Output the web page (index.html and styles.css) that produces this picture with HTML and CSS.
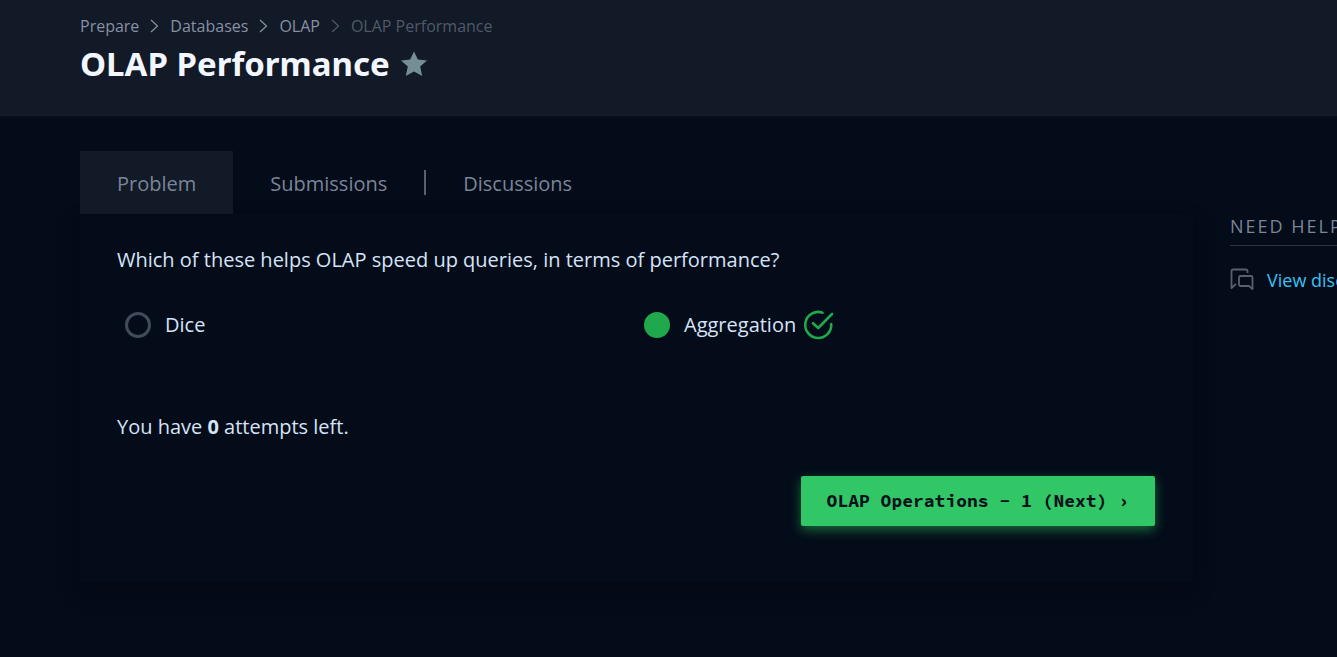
FILE: index.html
```html
<!DOCTYPE html>
<html lang="en">
<head>
<meta charset="utf-8">
<meta name="viewport" content="width=device-width, initial-scale=1">
<title>OLAP Performance</title>
<link rel="stylesheet" href="styles.css">
</head>
<body>
<header class="page-header">
  <nav class="breadcrumb" aria-label="Breadcrumb">
    <a href="#">Prepare</a>
    <svg class="chevron" viewBox="0 0 10 16" aria-hidden="true"><path d="M1.5 2l6.5 6-6.5 6"/></svg>
    <a href="#">Databases</a>
    <svg class="chevron" viewBox="0 0 10 16" aria-hidden="true"><path d="M1.5 2l6.5 6-6.5 6"/></svg>
    <a href="#">OLAP</a>
    <svg class="chevron dim" viewBox="0 0 10 16" aria-hidden="true"><path d="M1.5 2l6.5 6-6.5 6"/></svg>
    <span class="dim">OLAP Performance</span>
  </nav>
  <div class="title-row">
    <h1 class="title">OLAP Performance</h1>
    <button class="star-button" type="button" aria-label="Bookmark">
      <svg class="star" viewBox="0 0 26 26" aria-hidden="true"><path d="M13 .5l3.900 8 9.100.9-6.800 6.200 2 9.400-8.200-4.400-8.200 4.400 2-9.400L0 9.400l9.100-.9z"/></svg>
    </button>
  </div>
</header>
<div class="layout">
  <main class="main">
    <nav class="tabs" aria-label="Challenge sections">
      <a class="tab active" href="#">Problem</a>
      <a class="tab" href="#">Submissions</a>
      <span class="divider"></span>
      <a class="tab" href="#">Discussions</a>
    </nav>
    <section class="card">
      <p class="text" id="question">Which of these helps OLAP speed up queries, in terms of performance?</p>
      <div class="options" role="radiogroup" aria-labelledby="question">
        <div class="option">
          <input class="radio" type="radio" name="answer" id="dice">
          <label for="dice">Dice</label>
        </div>
        <div class="option">
          <input class="radio" type="radio" name="answer" id="aggregation" checked>
          <label for="aggregation">Aggregation</label>
          <svg class="check" viewBox="0 0 32 32" aria-hidden="true"><path d="M20.5 3.7A13 13 0 1 0 29.2 15M11 14.2l5.2 4.8L30 5"/></svg>
        </div>
      </div>
      <p class="text">You have <b>0</b> attempts left.</p>
      <div class="actions">
        <button class="next" type="button">OLAP Operations - 1 (Next) ›</button>
      </div>
    </section>
  </main>
  <aside class="sidebar">
    <h2 class="side-title">NEED HELP?</h2>
    <a class="side-link" href="#">
      <svg class="chat" viewBox="0 0 24 24" aria-hidden="true"><path d="M17.5 5V3.200q0-1.700-1.700-1.700H3.200q-1.700 0-1.700 1.700V20L6 16M10.500 8h10.500q1.500 0 1.500 1.500V21l-3.500-3h-8.500q-1.500 0-1.500-1.500v-7q0-1.500 1.500-1.500z"/></svg>
      <span>View discussions</span>
    </a>
  </aside>
</div>
</body>
</html>
```
FILE: styles.css
```css
* {
  box-sizing: border-box;
}

body {
  margin: 0;
  min-height: 100vh;
  overflow-x: hidden;
  background: #040b19;
  color: #d6e4f7;
  font: 20px/28px "Open Sans", "Noto Sans", sans-serif;
}

a {
  color: inherit;
  text-decoration: none;
}

.page-header {
  padding: 14px 80px 27px;
  background: #121927;
  box-shadow: 0 1px 3px #0c1320;
}

.breadcrumb {
  display: flex;
  flex-wrap: wrap;
  align-items: center;
  gap: 10px;
  color: #8791a3;
  font-size: 16px;
  line-height: 24px;
}

.chevron {
  width: 11px;
  height: 16px;
  fill: none;
  stroke: currentColor;
  stroke-width: 1.2;
}

.dim {
  color: #505968;
}

.title-row {
  display: flex;
  align-items: center;
  gap: 11px;
}

.title {
  margin: 0;
  color: #f1f6ff;
  font-family: "Noto Sans", "Open Sans", sans-serif;
  font-size: 33px;
  line-height: 51px;
}

.star-button {
  display: flex;
  padding: 0;
  border: 0;
  background: none;
}

.star {
  width: 26px;
  height: 26px;
  fill: #738f93;
}

.layout {
  display: flex;
  gap: 37px;
  padding: 35px 0 70px 80px;
}

.main {
  flex: 1;
  min-width: 0;
}

.tabs {
  display: flex;
  flex-wrap: wrap;
  align-items: center;
  color: #7b8598;
}

.tab {
  padding: 19px 37px 16px;
}

.active {
  background: #121927;
}

.divider {
  width: 2px;
  height: 25px;
  background: #596170;
}

.card {
  padding: 32px 38px 56px 37px;
  box-shadow: 0 8px 16px #040914;
  background: #040b19;
}

.text {
  margin: 0;
}

.options {
  display: grid;
  grid-template-columns: 1fr 1fr;
  margin-right: -8px;
  padding: 37px 0 74px 8px;
}

.option {
  display: flex;
  align-items: center;
}

.radio {
  width: 26px;
  height: 26px;
  margin: 0 14px 0 0;
  border: 3px solid #424b5a;
  border-radius: 50%;
  appearance: none;
}

.radio:checked {
  border-color: #1fa94c;
  background: #1fa94c;
}

.check {
  width: 32px;
  height: 32px;
  margin: -2px 0 -2px 6px;
  fill: none;
  stroke: #1fa94c;
  stroke-width: 2.6;
  stroke-linecap: round;
  stroke-linejoin: round;
}

.actions {
  display: flex;
  justify-content: flex-end;
  padding-top: 35px;
}

.next {
  padding: 11px 26px;
  border: 0;
  border-radius: 2px;
  background: #32c766;
  box-shadow: 0 4px 12px #166b3a;
  color: #06111c;
  font: bold 18px/28px "Source Code Pro", "DejaVu Sans Mono", monospace;
}

.sidebar {
  flex: 0 0 107px;
  overflow: hidden;
  padding-top: 61px;
  white-space: nowrap;
}

.side-title {
  margin: 0;
  padding-bottom: 5px;
  border-bottom: 1px solid #2d3542;
  color: #7b8598;
  font-size: 18px;
  font-weight: 400;
  line-height: 28px;
  letter-spacing: 2px;
}

.side-link {
  display: flex;
  align-items: center;
  gap: 13px;
  padding-top: 20px;
  color: #39c2f0;
  font-size: 18px;
}

.chat {
  flex: none;
  width: 24px;
  height: 24px;
  fill: none;
  stroke: #596170;
  stroke-width: 1.8;
  stroke-linejoin: round;
}
```
